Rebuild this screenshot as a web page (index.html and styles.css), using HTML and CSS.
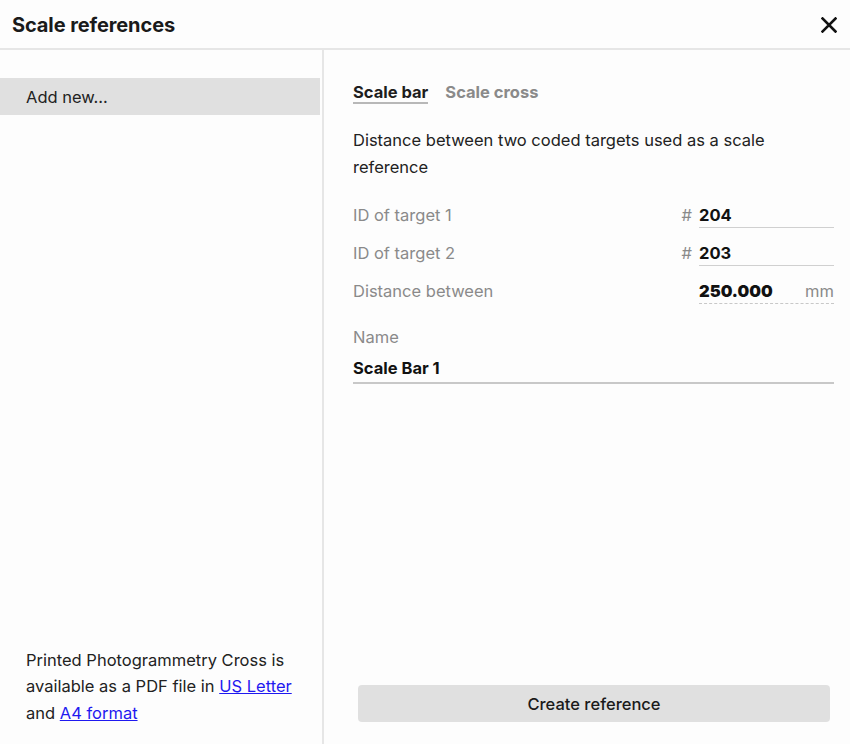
FILE: index.html
```html
<!DOCTYPE html>
<html lang="en">
<head>
<meta charset="utf-8">
<title>Scale references</title>
<link rel="stylesheet" href="styles.css">
</head>
<body>
<div class="dialog">
  <header class="header">
    <h1 class="title">Scale references</h1>
    <button class="close" aria-label="Close">
      <svg width="16" height="16" viewBox="0 0 16 16"><path d="M1.5 1.5 L14.5 14.5 M14.5 1.5 L1.5 14.5" stroke="#111" stroke-width="2.6" stroke-linecap="square" fill="none"/></svg>
    </button>
  </header>
  <div class="body">
    <aside class="sidebar">
      <div class="list">
        <div class="list-item">Add new...</div>
      </div>
      <p class="note">Printed Photogrammetry Cross is available as a PDF file in <a href="#">US Letter</a> and <a href="#">A4 format</a></p>
    </aside>
    <main class="content">
      <nav class="tabs">
        <span class="tab active">Scale bar</span>
        <span class="tab">Scale cross</span>
      </nav>
      <p class="desc">Distance between two coded targets used as a scale reference</p>
      <div class="fields">
        <div class="field">
          <span class="label">ID of target 1</span>
          <span class="prefix">#</span>
          <span class="value">204</span>
        </div>
        <div class="field">
          <span class="label">ID of target 2</span>
          <span class="prefix">#</span>
          <span class="value">203</span>
        </div>
        <div class="field">
          <span class="label">Distance between</span>
          <span class="value dotted"><b>250.000</b><span class="unit">mm</span></span>
        </div>
      </div>
      <div class="name-field">
        <div class="label">Name</div>
        <div class="name-value">Scale Bar 1</div>
      </div>
      <div class="spacer"></div>
      <button class="create">Create reference</button>
    </main>
  </div>
</div>
</body>
</html>
```
FILE: styles.css
```css
* { box-sizing: border-box; }
html, body { margin: 0; padding: 0; }
body {
  background: #fdfdfd;
  font-family: "Inter", "Roboto", "Liberation Sans", sans-serif;
  color: #222;
  font-size: 16.5px;
}
.dialog {
  width: 850px;
  height: 744px;
  display: flex;
  flex-direction: column;
}
.header {
  height: 50px;
  border-bottom: 2px solid #e6e6e6;
  display: flex;
  align-items: center;
  justify-content: space-between;
  padding: 1px 13px 0 12px;
}
.title {
  margin: 0;
  font-size: 20px;
  font-weight: 700;
  color: #1a1a1a;
  letter-spacing: -0.1px;
}
.close {
  border: 0;
  background: none;
  padding: 0;
  width: 16px;
  height: 16px;
  display: flex;
}
.body {
  flex: 1;
  display: flex;
  min-height: 0;
}
.sidebar {
  width: 324px;
  border-right: 2px solid #e6e6e6;
  display: flex;
  flex-direction: column;
  justify-content: space-between;
  padding: 28px 0 0 0;
}
.list-item {
  background: #e0e0e0;
  height: 37px;
  margin-right: 2px;
  padding-left: 26px;
  display: flex;
  align-items: center;
  color: #222;
}
.note {
  margin: 0 0 18px 0;
  padding: 0 20px 0 26px;
  line-height: 26.5px;
  color: #222;
}
.note a { color: #1f19f0; text-decoration: underline; }
.content {
  flex: 1;
  display: flex;
  flex-direction: column;
  padding: 32px 16px 22px 29px;
}
.tabs {
  display: flex;
  gap: 17px;
}
.tab {
  font-weight: 700;
  color: #8a8a8a;
  line-height: 20px;
  border-bottom: 2px solid transparent;
}
.tab.active {
  color: #1e1e1e;
  border-bottom-color: #b8b8b8;
}
.desc {
  margin: 23px 0 0 0;
  line-height: 27px;
  color: #222;
  padding-right: 40px;
}
.fields {
  margin-top: 24px;
  display: flex;
  flex-direction: column;
}
.field {
  height: 38px;
  display: flex;
  align-items: baseline;
  line-height: 20px;
}
.label {
  color: #8a8a8a;
  line-height: 20px;
}
.field .label { flex: 1; }
.prefix {
  color: #8a8a8a;
  margin-right: 7px;
}
.value {
  width: 135px;
  font-weight: 700;
  color: #111;
  border-bottom: 1px solid #d0d0d0;
  padding: 0 0 2px;
}
.value.dotted {
  border-bottom: 1px dashed #c8c8c8;
  display: flex;
  justify-content: space-between;
}
.unit {
  font-weight: 400;
  color: #8a8a8a;
}
.name-field {
  margin-top: 8px;
}
.name-value {
  margin-top: 11px;
  font-weight: 700;
  color: #111;
  line-height: 20px;
  padding-bottom: 4px;
  border-bottom: 2px solid #c8c8c8;
}
.spacer { flex: 1; }
.create {
  margin: 0 4px 0 5px;
  height: 37px;
  background: #e0e0e0;
  border: 0;
  border-radius: 4px;
  font-family: inherit;
  font-size: 16.5px;
  font-weight: 500;
  color: #1a1a1a;
}
```
